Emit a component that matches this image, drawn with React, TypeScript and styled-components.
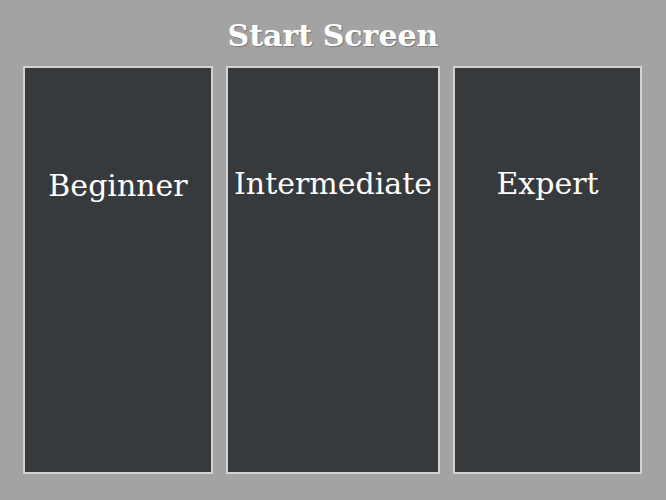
import styled, { createGlobalStyle } from "styled-components";

const GlobalStyle = createGlobalStyle`
  html, body {
    margin: 0;
    padding: 0;
    background: #a3a3a3;
  }
`;

const Screen = styled.div`
  width: 666px;
  height: 500px;
  box-sizing: border-box;
  padding: 16px 23px 26px;
  display: flex;
  flex-direction: column;
  gap: 10px;
  font-family: "DejaVu Serif", serif;
`;

const Title = styled.h1`
  margin: 0;
  text-align: center;
  color: #ffffff;
  font-size: 30px;
  font-weight: bold;
  line-height: 40px;
  text-shadow: 1px 1px 1px rgba(0, 0, 0, 0.25);
`;

const Row = styled.div`
  flex: 1;
  display: grid;
  grid-template-columns: 190px 214px 189px;
  column-gap: 13px;
`;

const Card = styled.button<{ $top: number }>`
  box-sizing: border-box;
  border: 2px solid #d2d2d2;
  background: #373a3d;
  color: #ffffff;
  font-family: inherit;
  font-size: 30px;
  line-height: 36px;
  padding: ${(p) => p.$top}px 0 0;
  display: flex;
  justify-content: center;
  align-items: flex-start;
  cursor: pointer;
  white-space: nowrap;
`;

export default function App() {
  return (
    <>
      <GlobalStyle />
      <Screen>
        <Title>Start Screen</Title>
        <Row>
          <Card $top={100}>Beginner</Card>
          <Card $top={98}>Intermediate</Card>
          <Card $top={98}>Expert</Card>
        </Row>
      </Screen>
    </>
  );
}
